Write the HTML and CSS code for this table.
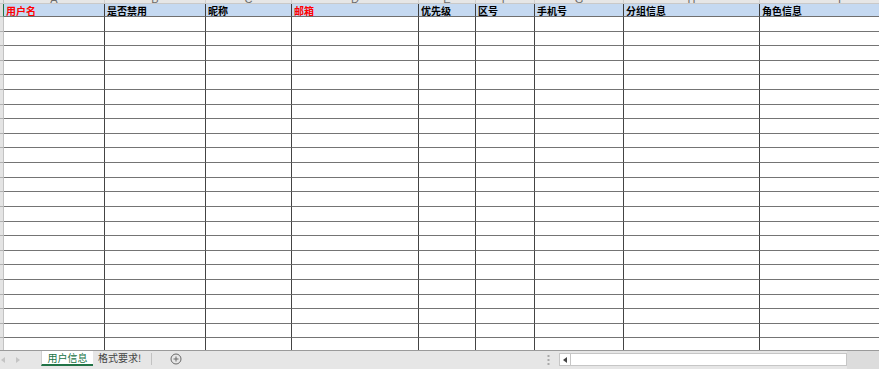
FILE: index.html
```html
<!DOCTYPE html>
<html lang="zh-CN">
<head>
<meta charset="utf-8">
<title>用户信息</title>
<link rel="stylesheet" href="styles.css">
</head>
<body>
<div class="app">
  <div class="sheet">
    <div class="row letters">
      <div class="rh"></div>
      <div class="c"><span>A</span></div><div class="c"><span>B</span></div><div class="c"><span>C</span></div><div class="c"><span>D</span></div><div class="c"><span>E</span></div><div class="c"><span>F</span></div><div class="c"><span>G</span></div><div class="c"><span>H</span></div><div class="c"><span>I</span></div>
    </div>
    <div class="row head">
      <div class="rh sel"></div>
      <div class="c red">用户名</div><div class="c">是否禁用</div><div class="c">昵称</div><div class="c red">邮箱</div><div class="c">优先级</div><div class="c">区号</div><div class="c">手机号</div><div class="c">分组信息</div><div class="c">角色信息</div>
    </div>
    <div class="body">
      <div class="row"><div class="rh"></div><div class="c"></div><div class="c"></div><div class="c"></div><div class="c"></div><div class="c"></div><div class="c"></div><div class="c"></div><div class="c"></div><div class="c"></div></div>
      <div class="row"><div class="rh"></div><div class="c"></div><div class="c"></div><div class="c"></div><div class="c"></div><div class="c"></div><div class="c"></div><div class="c"></div><div class="c"></div><div class="c"></div></div>
      <div class="row"><div class="rh"></div><div class="c"></div><div class="c"></div><div class="c"></div><div class="c"></div><div class="c"></div><div class="c"></div><div class="c"></div><div class="c"></div><div class="c"></div></div>
      <div class="row"><div class="rh"></div><div class="c"></div><div class="c"></div><div class="c"></div><div class="c"></div><div class="c"></div><div class="c"></div><div class="c"></div><div class="c"></div><div class="c"></div></div>
      <div class="row"><div class="rh"></div><div class="c"></div><div class="c"></div><div class="c"></div><div class="c"></div><div class="c"></div><div class="c"></div><div class="c"></div><div class="c"></div><div class="c"></div></div>
      <div class="row"><div class="rh"></div><div class="c"></div><div class="c"></div><div class="c"></div><div class="c"></div><div class="c"></div><div class="c"></div><div class="c"></div><div class="c"></div><div class="c"></div></div>
      <div class="row"><div class="rh"></div><div class="c"></div><div class="c"></div><div class="c"></div><div class="c"></div><div class="c"></div><div class="c"></div><div class="c"></div><div class="c"></div><div class="c"></div></div>
      <div class="row"><div class="rh"></div><div class="c"></div><div class="c"></div><div class="c"></div><div class="c"></div><div class="c"></div><div class="c"></div><div class="c"></div><div class="c"></div><div class="c"></div></div>
      <div class="row"><div class="rh"></div><div class="c"></div><div class="c"></div><div class="c"></div><div class="c"></div><div class="c"></div><div class="c"></div><div class="c"></div><div class="c"></div><div class="c"></div></div>
      <div class="row"><div class="rh"></div><div class="c"></div><div class="c"></div><div class="c"></div><div class="c"></div><div class="c"></div><div class="c"></div><div class="c"></div><div class="c"></div><div class="c"></div></div>
      <div class="row"><div class="rh"></div><div class="c"></div><div class="c"></div><div class="c"></div><div class="c"></div><div class="c"></div><div class="c"></div><div class="c"></div><div class="c"></div><div class="c"></div></div>
      <div class="row"><div class="rh"></div><div class="c"></div><div class="c"></div><div class="c"></div><div class="c"></div><div class="c"></div><div class="c"></div><div class="c"></div><div class="c"></div><div class="c"></div></div>
      <div class="row"><div class="rh"></div><div class="c"></div><div class="c"></div><div class="c"></div><div class="c"></div><div class="c"></div><div class="c"></div><div class="c"></div><div class="c"></div><div class="c"></div></div>
      <div class="row"><div class="rh"></div><div class="c"></div><div class="c"></div><div class="c"></div><div class="c"></div><div class="c"></div><div class="c"></div><div class="c"></div><div class="c"></div><div class="c"></div></div>
      <div class="row"><div class="rh"></div><div class="c"></div><div class="c"></div><div class="c"></div><div class="c"></div><div class="c"></div><div class="c"></div><div class="c"></div><div class="c"></div><div class="c"></div></div>
      <div class="row"><div class="rh"></div><div class="c"></div><div class="c"></div><div class="c"></div><div class="c"></div><div class="c"></div><div class="c"></div><div class="c"></div><div class="c"></div><div class="c"></div></div>
      <div class="row"><div class="rh"></div><div class="c"></div><div class="c"></div><div class="c"></div><div class="c"></div><div class="c"></div><div class="c"></div><div class="c"></div><div class="c"></div><div class="c"></div></div>
      <div class="row"><div class="rh"></div><div class="c"></div><div class="c"></div><div class="c"></div><div class="c"></div><div class="c"></div><div class="c"></div><div class="c"></div><div class="c"></div><div class="c"></div></div>
      <div class="row"><div class="rh"></div><div class="c"></div><div class="c"></div><div class="c"></div><div class="c"></div><div class="c"></div><div class="c"></div><div class="c"></div><div class="c"></div><div class="c"></div></div>
      <div class="row"><div class="rh"></div><div class="c"></div><div class="c"></div><div class="c"></div><div class="c"></div><div class="c"></div><div class="c"></div><div class="c"></div><div class="c"></div><div class="c"></div></div>
      <div class="row"><div class="rh"></div><div class="c"></div><div class="c"></div><div class="c"></div><div class="c"></div><div class="c"></div><div class="c"></div><div class="c"></div><div class="c"></div><div class="c"></div></div>
      <div class="row"><div class="rh"></div><div class="c"></div><div class="c"></div><div class="c"></div><div class="c"></div><div class="c"></div><div class="c"></div><div class="c"></div><div class="c"></div><div class="c"></div></div>
      <div class="row"><div class="rh"></div><div class="c"></div><div class="c"></div><div class="c"></div><div class="c"></div><div class="c"></div><div class="c"></div><div class="c"></div><div class="c"></div><div class="c"></div></div>
      <div class="row"><div class="rh"></div><div class="c"></div><div class="c"></div><div class="c"></div><div class="c"></div><div class="c"></div><div class="c"></div><div class="c"></div><div class="c"></div><div class="c"></div></div>
    </div>
  </div>
  <div class="tabbar">
    <div class="nav">
      <svg width="4" height="6" viewBox="0 0 4 6"><path d="M4 0 L0 3 L4 6 Z" fill="#c4c4c4"/></svg>
      <svg width="4" height="6" viewBox="0 0 4 6"><path d="M0 0 L4 3 L0 6 Z" fill="#c4c4c4"/></svg>
    </div>
    <div class="tab active">用户信息</div>
    <div class="tab">格式要求!</div>
    <div class="sep"></div>
    <svg class="add" width="12" height="12" viewBox="0 0 12 12"><circle cx="6" cy="6" r="5" fill="none" stroke="#6a6a6a" stroke-width="1"/><path d="M3.5 6 H8.5 M6 3.5 V8.5" stroke="#6a6a6a" stroke-width="1"/></svg>
    <div class="spacer"></div>
    <svg class="grip" width="3" height="10" viewBox="0 0 3 10"><rect x="0.5" y="0" width="2" height="2" fill="#a8a8a8"/><rect x="0.5" y="4" width="2" height="2" fill="#a8a8a8"/><rect x="0.5" y="8" width="2" height="2" fill="#a8a8a8"/></svg>
    <div class="scroll">
      <div class="sbtn"><svg width="4" height="6" viewBox="0 0 4 6"><path d="M4 0 L0 3 L4 6 Z" fill="#444"/></svg></div>
      <div class="track"></div>
    </div>
    <div class="corner"></div>
  </div>
</div>
</body>
</html>
```
FILE: styles.css
```css
* {
  box-sizing: border-box;
  margin: 0;
  padding: 0;
}

html,
body {
  width: 879px;
  height: 369px;
  overflow: hidden;
  background: #ffffff;
}

body {
  font-family: "Noto Sans CJK SC", "Noto Sans", sans-serif;
}

.app {
  display: flex;
  flex-direction: column;
  height: 369px;
}

.sheet {
  flex: none;
  height: 350px;
  overflow: hidden;
}

.row {
  display: grid;
  grid-template-columns: 4px 101px 101px 86px 127px 57px 59px 89px 136px 160px;
}

.rh {
  background: #e4e4e4;
  border-right: 1px solid #c2c2c2;
  border-bottom: 1px solid #b0b0b0;
}

/* column letter strip (mostly scrolled out of view) */
.letters {
  height: 4px;
  background: #e6e6e6;
  border-bottom: 1px solid #c9c9c9;
}

.letters .rh {
  border-bottom: none;
}

.letters .c {
  display: flex;
  justify-content: center;
  align-items: flex-end;
  overflow: hidden;
  border-right: 1px solid #cfcfcf;
  font-family: "Liberation Sans", Arial, sans-serif;
  font-size: 11px;
  line-height: 11px;
  color: #6a6a6a;
}

.letters span {
  margin-bottom: -2px;
}

/* header row */
.head {
  height: 13px;
  background: #c5d9f1;
}

.head .c {
  border-right: 1px solid #3e3e3e;
  border-bottom: 1px solid #707070;
  padding: 1px 0 0 2px;
  font-size: 10px;
  font-weight: 700;
  line-height: 12px;
  color: #000000;
  white-space: nowrap;
  overflow: hidden;
}

.head .sel {
  border-right: 1px solid #217346;
  background: #dcdcdc;
}

.head .c.red {
  color: #ff0000;
}

/* data rows */
.body .row {
  height: 14.62px;
}

.body .c {
  border-right: 1px solid #444444;
  border-bottom: 1px solid #747474;
}

/* sheet tabs */
.tabbar {
  flex: none;
  height: 19px;
  display: flex;
  align-items: flex-start;
  background: #e6e6e6;
  border-top: 1px solid #9a9a9a;
  font-size: 10px;
  color: #444444;
}

.nav {
  width: 41px;
  height: 17px;
  display: flex;
  align-items: center;
  gap: 11px;
  padding-left: 1px;
}

.tab {
  height: 15px;
  line-height: 14px;
  padding: 0 6px 0 5px;
  white-space: nowrap;
}

.tab.active {
  width: 52px;
  background: #ffffff;
  color: #217346;
  border-left: 1px solid #d0d0d0;
  border-bottom: 2px solid #217346;
  text-align: center;
  padding: 0;
}

.sep {
  width: 1px;
  height: 12px;
  margin: 2px 0 0 4px;
  background: #c2c2c2;
}

.add {
  margin: 2px 0 0 18px;
}

.spacer {
  flex: 1;
}

.grip {
  margin: 4px 9px 0 0;
}

.scroll {
  display: flex;
  margin-top: 2px;
  height: 13px;
  border: 1px solid #c6c6c6;
  background: #ffffff;
}

.sbtn {
  width: 11px;
  display: flex;
  align-items: center;
  justify-content: center;
  border-right: 1px solid #c6c6c6;
}

.track {
  width: 275px;
}

.corner {
  width: 32px;
  height: 18px;
  background: #dcdcdc;
}
```
